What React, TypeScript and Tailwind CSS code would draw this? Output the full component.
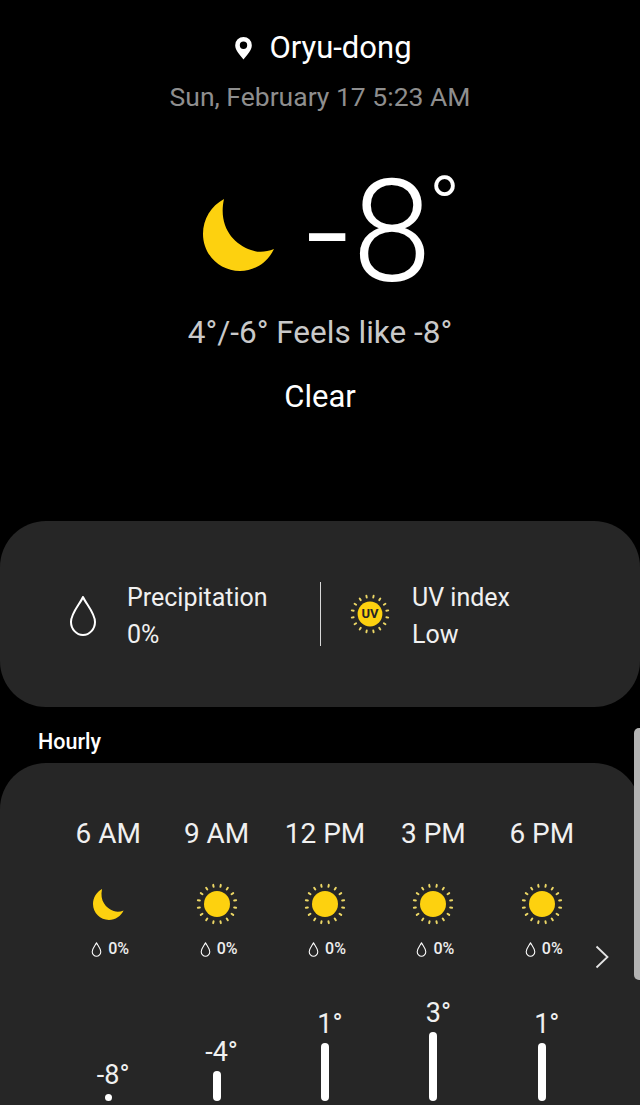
import React from 'react';

const hours = [
  { time: '6 AM', icon: 'moon', temp: '-8°', bar: 7 },
  { time: '9 AM', icon: 'sun', temp: '-4°', bar: 30 },
  { time: '12 PM', icon: 'sun', temp: '1°', bar: 58 },
  { time: '3 PM', icon: 'sun', temp: '3°', bar: 69 },
  { time: '6 PM', icon: 'sun', temp: '1°', bar: 58 },
];

function Moon({ className }: { className?: string }) {
  return (
    <svg viewBox="0 0 72 72" className={className}>
      <path
        d="M21 0C8 7 0 20 0 35c0 21 17 37 37 37 15 0 28-9 34-22-8 3-15 4-23 1C30 45 15 27 21 0Z"
        fill="#fdd10f"
      />
    </svg>
  );
}

function Sun({ className }: { className?: string }) {
  const rays = Array.from({ length: 16 }, (_, i) => i * 22.5 + 11.25);
  return (
    <svg viewBox="0 0 42 42" className={className}>
      {rays.map((a) => (
        <line
          key={a}
          x1="21"
          y1="1.500"
          x2="21"
          y2="3.500"
          stroke="#ecd766"
          strokeWidth="2"
          strokeLinecap="round"
          transform={`rotate(${a} 21 21)`}
        />
      ))}
      <circle cx="21" cy="21" r="13" fill="#fdd10f" />
    </svg>
  );
}

function Drop({ className, width = 2 }: { className?: string; width?: number }) {
  return (
    <svg viewBox="0 0 28 42" fill="none" className={className}>
      <path
        d="M14 2C11 9 2 18 2 27c0 7 5.400 13 12 13s12-6 12-13C26 18 17 9 14 2Z"
        stroke="white"
        strokeWidth={width}
        strokeLinejoin="round"
      />
    </svg>
  );
}

export default function App() {
  return (
    <div className="relative h-[1105px] w-[640px] overflow-hidden bg-black font-['Roboto',sans-serif] text-white">
      <header className="flex flex-col items-center pt-[28px]">
        <div className="flex h-[40px] items-center gap-[16px] pl-[6px] text-[31px] leading-[40px]">
          <svg viewBox="0 0 20 26" className="h-[24px] w-[19px]">
            <path
              fillRule="evenodd"
              d="M10 25.500C6 20.500 1 15.500 1 10a9 9 0 0 1 18 0c0 5.500-5 10.500-9 15.500ZM10 14a4 4 0 1 0 0-8 4 4 0 0 0 0 8Z"
              fill="white"
            />
          </svg>
          <span>Oryu-dong</span>
        </div>
        <div className="mt-[9px] text-[26.500px] leading-[40px] text-[#8e8e8e]">Sun, February 17 5:23 AM</div>
        <div className="mt-[48px] flex h-[136px] items-center pl-[24px]">
          <Moon className="mt-[4px] h-[72px] w-[72px]" />
          <div className="ml-[30px] flex items-start font-light leading-none">
            <span className="text-[155px] leading-[136px]">-</span>
            <span className="ml-[3px] text-[142px] leading-[136px]">8</span>
            <span className="-ml-[3px] text-[86px] leading-[86px]">°</span>
          </div>
        </div>
        <div className="mt-[12px] text-[31.500px] leading-[40px] text-[#c9c9c9]">4°/-6° Feels like -8°</div>
        <div className="mt-[24px] text-[31px] leading-[40px]">Clear</div>
      </header>

      <section className="mt-[104px] flex h-[186px] items-center rounded-[46px] bg-[#262626]">
        <div className="flex w-[320px] items-center">
          <Drop className="ml-[68px] mt-[4px] h-[42px] w-[30px]" />
          <div className="ml-[29px] mt-[4px] text-[25px] leading-[37px] text-[#f0f0f0]">
            <div>Precipitation</div>
            <div>0%</div>
          </div>
        </div>
        <div className="flex h-[64px] items-center border-l border-[#d8d8d8]">
          <div className="relative ml-[29px] h-[40px] w-[40px]">
            <Sun className="h-[40px] w-[40px]" />
            <span className="absolute inset-0 flex items-center justify-center text-[13px] font-bold text-[#262626]">UV</span>
          </div>
          <div className="ml-[22px] mt-[4px] text-[25px] leading-[37px] text-[#f0f0f0]">
            <div>UV index</div>
            <div>Low</div>
          </div>
        </div>
      </section>

      <h2 className="mt-[21px] pl-[38px] text-[21.500px] font-medium leading-[28px]">Hourly</h2>

      <section className="relative mt-[7px] h-[400px] rounded-[46px] bg-[#262626] pl-[54px] pr-[44px] pt-[53px]">
        <div className="grid grid-cols-5">
          {hours.map((h) => (
            <div key={h.time} className="flex flex-col items-center">
              <div className="text-[28px] leading-[36px] text-[#f0f0f0]">{h.time}</div>
              <div className="mt-[31px] flex h-[42px] items-center justify-center">
                {h.icon === 'moon' ? <Moon className="h-[31px] w-[31px]" /> : <Sun className="h-[42px] w-[42px]" />}
              </div>
              <div className="mt-[13px] flex h-[22px] items-center gap-[6px] pl-[4px] text-[16px] font-medium text-[#eeeeee]">
                <Drop className="h-[15px] w-[11px]" width={3} />
                <span>0%</span>
              </div>
            </div>
          ))}
        </div>
        <div className="mt-[20px] grid h-[121px] grid-cols-5 items-end">
          {hours.map((h) => (
            <div key={h.time} className="flex flex-col items-center">
              <div className="pl-[10px] text-[27px] leading-[36px] text-[#f0f0f0]">{h.temp}</div>
              <div
                className={`${h.bar < 10 ? 'w-[7px]' : 'w-[8px]'} mt-[1px] rounded-full bg-white`}
                style={{ height: h.bar }}
              />
            </div>
          ))}
        </div>
        <svg viewBox="0 0 14 24" fill="none" className="absolute left-[595px] top-[182px] h-[24px] w-[14px]">
          <path d="M1.500 1.500 12.500 12 1.500 22.500" stroke="#e4e4e4" strokeWidth="1.800" />
        </svg>
      </section>

      {/* overlay scroll indicator */}
      <div className="absolute right-0 top-[728px] h-[252px] w-[6px] rounded-l-[5px] bg-[#b4b4b4]" />
    </div>
  );
}
